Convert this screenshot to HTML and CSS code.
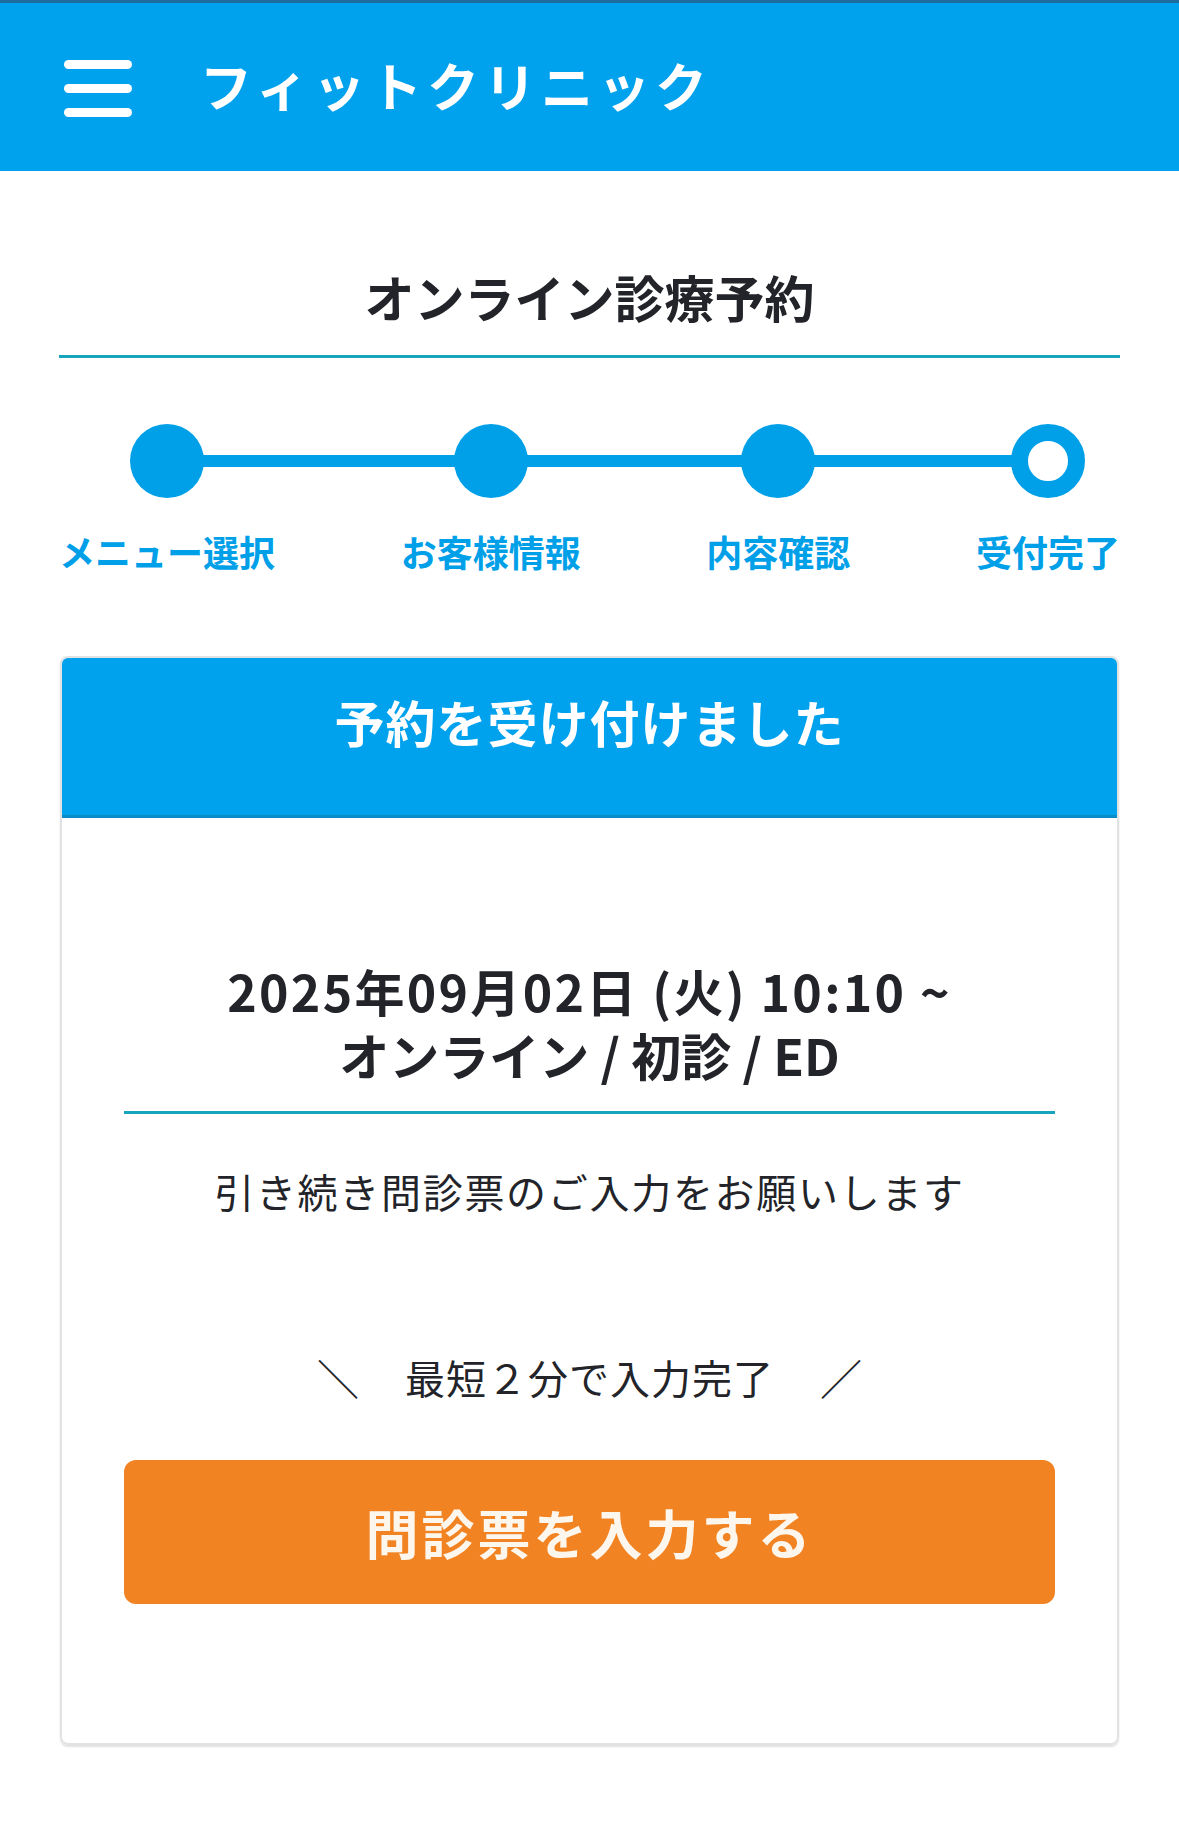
FILE: index.html
```html
<!DOCTYPE html>
<html lang="ja">
<head>
<meta charset="utf-8">
<title>フィットクリニック</title>
<link rel="stylesheet" href="styles.css">
</head>
<body>
<header class="topbar">
  <div class="hamburger" aria-label="menu">
    <span></span><span></span><span></span>
  </div>
  <div class="brand">フィットクリニック</div>
</header>
<main class="page">
  <h1 class="page-title">オンライン診療予約</h1>
  <ol class="stepper">
    <li class="step done"><span class="dot"></span><span class="label">メニュー選択</span></li>
    <li class="step done"><span class="dot"></span><span class="label">お客様情報</span></li>
    <li class="step done"><span class="dot"></span><span class="label">内容確認</span></li>
    <li class="step current"><span class="dot"></span><span class="label">受付完了</span></li>
  </ol>
  <section class="card">
    <div class="card-head">予約を受け付けました</div>
    <div class="card-body">
      <div class="booking">
        <span class="booking-date">2025年09月02日 (火) 10:10 ~</span>
        <span class="booking-menu">オンライン / 初診 / ED</span>
      </div>
      <p class="message">引き続き問診票のご入力をお願いします</p>
      <p class="hint"><span class="slash">＼</span><span>最短２分で入力完了</span><span class="slash">／</span></p>
      <a class="cta" href="#">問診票を入力する</a>
    </div>
  </section>
</main>
</body>
</html>
```
FILE: styles.css
```css
* { box-sizing: border-box; }
html, body { margin: 0; padding: 0; background: #fff; }
body {
  font-family: "Noto Sans CJK JP", "Noto Sans", sans-serif;
  color: #222429;
}

.topbar {
  height: 171px;
  background: #00a2ee;
  border-top: 3px solid #1d6e9e;
  display: flex;
  align-items: center;
  padding-left: 64px;
}
.hamburger {
  width: 68px;
  display: flex;
  flex-direction: column;
  gap: 15px;
  margin-top: 2px;
}
.hamburger span {
  display: block;
  height: 9px;
  border-radius: 5px;
  background: #fff;
}
.brand {
  margin-left: 68px;
  color: #fff;
  font-size: 52px;
  font-weight: 700;
  letter-spacing: 5px;
  line-height: 1;
  margin-top: -4px;
}

.page {
  padding: 0 59px 60px;
}
.page-title {
  margin: 88px 0 0;
  font-size: 50px;
  font-weight: 700;
  line-height: 75px;
  text-align: center;
  padding-bottom: 21px;
  border-bottom: 3px solid #17a5be;
  color: #222429;
}

.stepper {
  list-style: none;
  margin: 66px 0 0;
  padding: 0;
  display: flex;
  justify-content: space-between;
  position: relative;
}
.stepper::before {
  content: "";
  position: absolute;
  top: 31px;
  left: 109px;
  right: 74px;
  height: 12px;
  background: #00a0e9;
}
.step {
  display: flex;
  flex-direction: column;
  align-items: center;
  position: relative;
}
.dot {
  width: 74px;
  height: 74px;
  border-radius: 50%;
  background: #00a0e9;
}
.step.current .dot {
  background: #fff;
  border: 17px solid #00a0e9;
}
.label {
  margin-top: 26px;
  font-size: 36px;
  font-weight: 700;
  line-height: 54px;
  color: #00a0e9;
  white-space: nowrap;
}

.card {
  margin: 78px 1px 0;
  border: 2px solid #e2e2e2;
  border-radius: 8px;
  overflow: hidden;
  box-shadow: 0 2px 2px rgba(0, 0, 0, 0.12);
}
.card-head {
  background: #00a2ee;
  color: #fff;
  text-align: center;
  font-size: 50px;
  font-weight: 700;
  letter-spacing: 1px;
  line-height: 75px;
  padding: 26px 0 56px;
  border-bottom: 3px solid #0a8cc9;
}
.card-body {
  padding: 0 62px 139px;
  text-align: center;
}
.booking {
  margin: 140px 0 0;
  font-size: 50px;
  font-weight: 700;
  line-height: 64px;
  padding-bottom: 25px;
  border-bottom: 3px solid #17a5be;
  color: #222429;
}
.booking-date,
.booking-menu {
  display: block;
}
.booking-date {
  letter-spacing: 2.3px;
}
.message {
  margin: 47px 0 0;
  font-size: 40px;
  line-height: 60px;
  letter-spacing: 1.7px;
  color: #222429;
}
.hint {
  margin: 126px 0 0;
  font-size: 40px;
  line-height: 60px;
  letter-spacing: 1px;
  display: flex;
  justify-content: center;
  gap: 46px;
  color: #222429;
}
.hint .slash {
  letter-spacing: 0;
  font-size: 42px;
}
.cta {
  display: flex;
  align-items: center;
  justify-content: center;
  margin-top: 53px;
  height: 144px;
  border-radius: 12px;
  background: #f28322;
  color: #fdf6ec;
  font-size: 53px;
  font-weight: 700;
  letter-spacing: 3px;
  text-decoration: none;
}
```
